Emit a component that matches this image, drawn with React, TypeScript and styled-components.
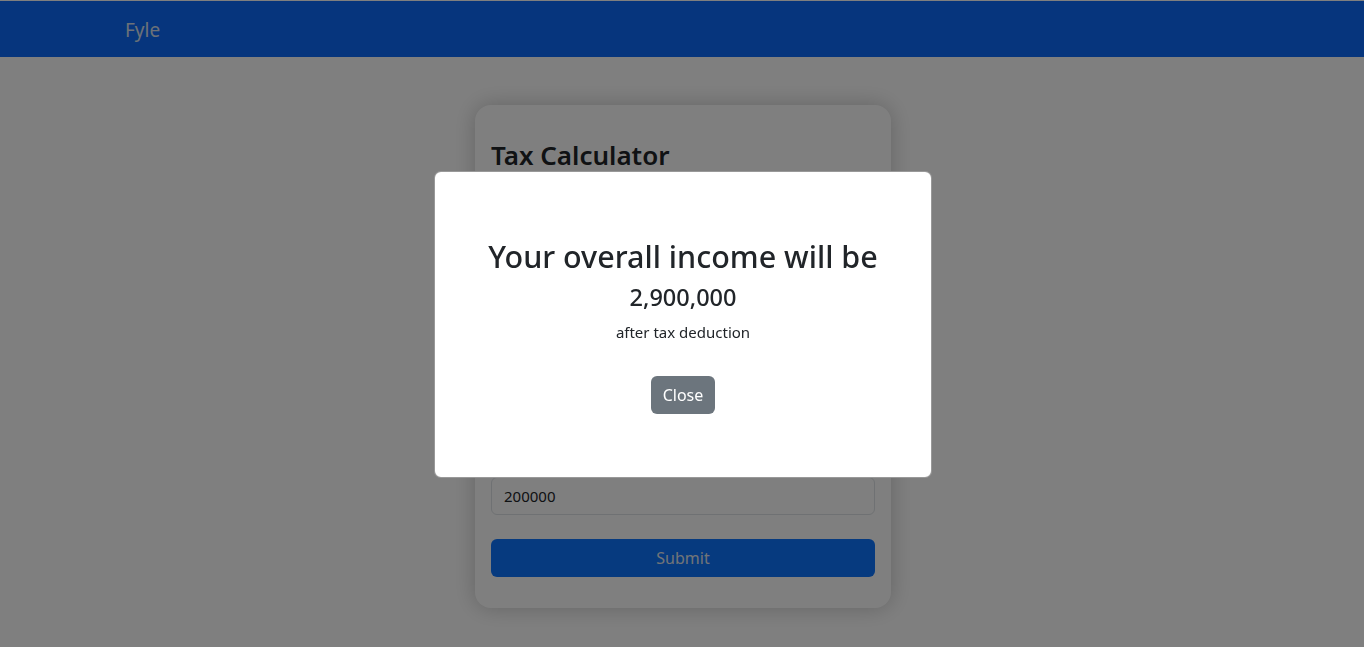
import React from 'react';
import styled, { createGlobalStyle } from 'styled-components';

const GlobalStyle = createGlobalStyle`
  html, body {
    margin: 0;
    padding: 0;
    background: #ffffff;
    font-family: "Noto Sans", "Open Sans", sans-serif;
    color: #212529;
  }
  * {
    box-sizing: border-box;
  }
`;

// Page
const Page = styled.div`
  min-height: 647px;
  padding-top: 1px;
`;

const Navbar = styled.nav`
  height: 56px;
  background: #0c6afa;
  display: flex;
  align-items: center;
  padding-left: 125px;
`;

const Brand = styled.span`
  margin-top: 3px;
  font-size: 19px;
  color: #d8e2f0;
  line-height: 1;
`;

const Main = styled.main`
  display: flex;
  justify-content: center;
  padding-top: 48px;
  padding-left: 2px;
`;

// Calculator card
const Card = styled.div`
  width: 416px;
  background: #ffffff;
  border-radius: 16px;
  box-shadow: 0 0 22px rgba(0, 0, 0, 0.22);
  padding: 35px 16px 31px;
`;

const Title = styled.h3`
  margin: 0 0 16px;
  font-size: 26px;
  font-weight: 600;
  line-height: 1.2;
`;

const Field = styled.div<{ $last?: boolean }>`
  display: flex;
  flex-direction: column;
  gap: 8px;
  margin-bottom: ${(p) => (p.$last ? '24px' : '16px')};
`;

const Label = styled.label`
  font-size: 16px;
  line-height: 24px;
`;

const Input = styled.input`
  height: 38px;
  width: 100%;
  padding: 6px 12px;
  font-family: inherit;
  font-size: 15px;
  color: #212529;
  background: #ffffff;
  border: 1px solid #dee2e6;
  border-radius: 6px;
`;

const SubmitButton = styled.button`
  width: 100%;
  height: 38px;
  border: none;
  border-radius: 6px;
  background: #0c74fe;
  color: #e2e8f0;
  font-family: inherit;
  font-size: 16px;
`;

// Modal
const Backdrop = styled.div`
  position: fixed;
  inset: 0;
  background: rgba(0, 0, 0, 0.5);
  display: flex;
  align-items: center;
  justify-content: center;
  padding: 2px 0 0 2px;
`;

const Dialog = styled.div`
  width: 498px;
  background: #ffffff;
  border: 1px solid rgba(0, 0, 0, 0.4);
  border-radius: 7px;
  padding: 64px 16px 63px;
  display: flex;
  flex-direction: column;
  align-items: center;
  text-align: center;
`;

const ResultHeading = styled.h2`
  margin: 0 0 7px;
  font-size: 30.5px;
  font-weight: 500;
  line-height: 40px;
`;

const Amount = styled.h4`
  margin: 0 0 8px;
  font-size: 23.5px;
  font-weight: 500;
  line-height: 29px;
`;

const Note = styled.p`
  margin: 0 0 32px;
  font-size: 15px;
  line-height: 24px;
`;

const CloseButton = styled.button`
  height: 38px;
  padding: 6px 12px;
  border: none;
  border-radius: 6px;
  background: #6c757d;
  color: #ffffff;
  font-family: inherit;
  font-size: 16px;
`;

const fields = [
  { label: 'Gross Annual Income', value: '3000000' },
  { label: 'Extra Income', value: '100000' },
  { label: 'Age Group', value: '< 40' },
  { label: 'Total Applicable Deductions', value: '200000' },
];

export default function App() {
  return (
    <Page>
      <GlobalStyle />
      <Navbar>
        <Brand>Fyle</Brand>
      </Navbar>
      <Main>
        <Card>
          <Title>Tax Calculator</Title>
          {fields.map((f, i) => (
            <Field key={f.label} $last={i === fields.length - 1}>
              <Label>{f.label}</Label>
              <Input defaultValue={f.value} />
            </Field>
          ))}
          <SubmitButton>Submit</SubmitButton>
        </Card>
      </Main>
      <Backdrop>
        <Dialog>
          <ResultHeading>Your overall income will be</ResultHeading>
          <Amount>2,900,000</Amount>
          <Note>after tax deduction</Note>
          <CloseButton>Close</CloseButton>
        </Dialog>
      </Backdrop>
    </Page>
  );
}
